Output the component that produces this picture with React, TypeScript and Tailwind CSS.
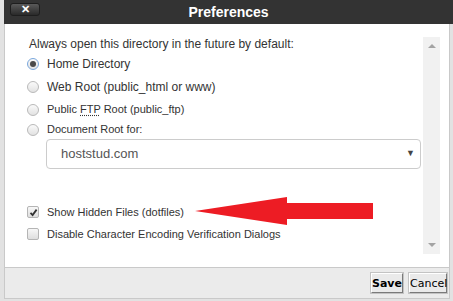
import React from 'react';

const Radio: React.FC<{ checked?: boolean }> = ({ checked }) => (
  <span
    className={`flex h-[12px] w-[12px] shrink-0 items-center justify-center rounded-full border bg-gradient-to-b from-[#fafafa] to-[#e2e2e2] ${
      checked ? 'border-[#7aa7dc]' : 'border-[#b9b9b9]'
    }`}
  >
    {checked && <span className="h-[6px] w-[6px] rounded-full bg-[#4a4a4a]" />}
  </span>
);

const Checkbox: React.FC<{ checked?: boolean }> = ({ checked }) => (
  <span className="flex h-[12px] w-[12px] shrink-0 items-center justify-center rounded-[2px] border border-[#b5b5b5] bg-gradient-to-b from-[#f7f7f7] to-[#dedede]">
    {checked && (
      <svg width="9" height="9" viewBox="0 0 9 9">
        <path d="M1.5 4.8 L3.6 7 L7.6 1.6" fill="none" stroke="#333" strokeWidth="1.8" />
      </svg>
    )}
  </span>
);

const App: React.FC = () => {
  return (
    <div className="relative h-[301px] w-[453px] overflow-hidden bg-[#e2e2e2] font-['Liberation_Sans',Arial,sans-serif] text-[#333]">
      <div className="ml-[4px] flex w-[449px] flex-col">
        <div className="relative flex h-[24px] items-center justify-center bg-[#333]">
          <button className="absolute left-[6px] top-[3px] flex h-[13px] w-[30px] items-center justify-center rounded-[3px] border border-[#1e1e1e] bg-gradient-to-b from-[#5a5a5a] to-[#2a2a2a] text-[11px] font-bold leading-none text-white">
            ✕
          </button>
          <span className="text-[14px] font-bold text-white">Preferences</span>
        </div>

        <div className="flex h-[243px] w-[446px] border-x border-[#c9c9c9] bg-white">
          <div className="flex-1 pl-[22px] pt-[13px]">
            <div className="h-[14px] pl-[2px] text-[12px] leading-[14px]">
              Always open this directory in the future by default:
            </div>
            <div className="mt-[1px] flex h-[23px] items-center gap-[8px] text-[12px]">
              <Radio checked />
              <span>Home Directory</span>
            </div>
            <div className="flex h-[23px] items-center gap-[8px] text-[12px]">
              <Radio />
              <span>Web Root (public_html or www)</span>
            </div>
            <div className="flex h-[23px] items-center gap-[8px] text-[11px]">
              <Radio />
              <span>
                Public <abbr className="underline decoration-dotted underline-offset-2">FTP</abbr> Root (public_ftp)
              </span>
            </div>
            <div className="flex h-[17px] items-center gap-[8px] text-[11px]">
              <Radio />
              <span>Document Root for:</span>
            </div>
            <div className="ml-[19px] mt-[1px] flex h-[30px] w-[375px] items-center justify-between rounded-[4px] border border-[#ccc] pl-[14px] pr-[5px]">
              <span className="text-[13px] text-[#555]">hoststud.com</span>
              <span className="text-[9px] text-[#444]">▼</span>
            </div>
            <div className="mt-[32px] flex h-[22px] items-center gap-[8px] text-[11px]">
              <Checkbox checked />
              <span>Show Hidden Files (dotfiles)</span>
            </div>
            <div className="flex h-[22px] items-center gap-[8px] text-[11px]">
              <Checkbox />
              <span>Disable Character Encoding Verification Dialogs</span>
            </div>
          </div>
          <div className="mb-[13px] mr-[9px] mt-[13px] flex w-[17px] flex-col items-center justify-between bg-[#f1f1f1] py-[7px]">
            <svg width="8" height="4" viewBox="0 0 8 4">
              <path d="M0 4 L4 0 L8 4 Z" fill="#a3a3a3" />
            </svg>
            <svg width="8" height="4" viewBox="0 0 8 4">
              <path d="M0 0 L8 0 L4 4 Z" fill="#a3a3a3" />
            </svg>
          </div>
        </div>

        <div className="flex h-[32px] w-[446px] items-center justify-end gap-[6px] border border-[#c9c9c9] bg-[#ebebeb] pr-[2px] font-['DejaVu_Sans',Verdana,sans-serif] text-[11px] text-black">
          <button className="h-[20px] w-[32px] border border-t-[#fff] border-l-[#fff] border-b-[#7a7a7a] border-r-[#7a7a7a] bg-[#eaeaea] font-bold leading-none outline outline-1 outline-[#c3c3c3]">
            Save
          </button>
          <button className="h-[20px] w-[38px] border border-t-[#fff] border-l-[#fff] border-b-[#7a7a7a] border-r-[#7a7a7a] bg-[#eaeaea] leading-none outline outline-1 outline-[#c3c3c3]">
            Cancel
          </button>
        </div>
      </div>

      <svg className="absolute left-[195px] top-[197px]" width="180" height="30" viewBox="0 0 180 30">
        <polygon points="0,14 92,0 92,6 178,6 178,22 92,22 92,28" fill="#ed1c24" />
      </svg>
    </div>
  );
};

export default App;
